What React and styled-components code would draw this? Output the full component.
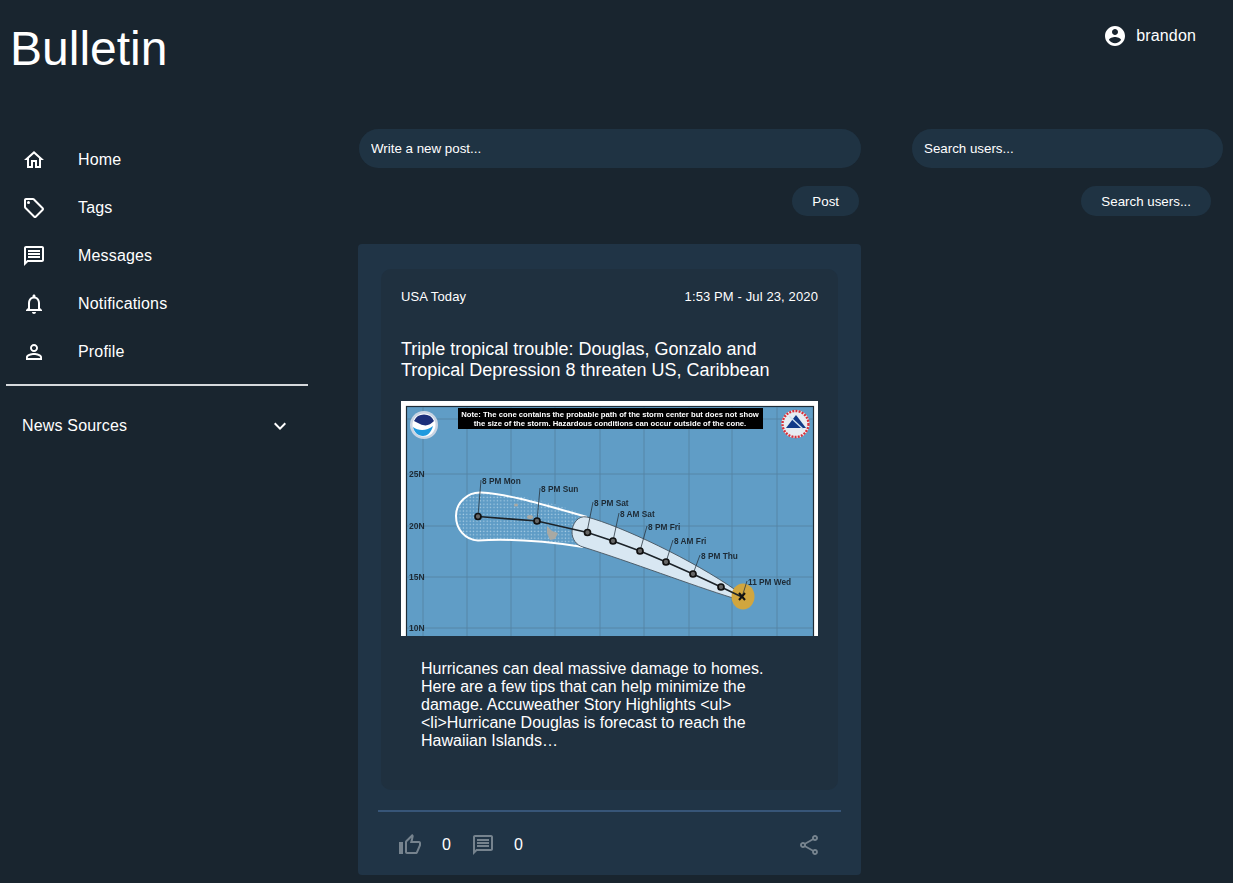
import React from 'react';
import styled, { createGlobalStyle } from 'styled-components';

const Global = createGlobalStyle`
  html, body { margin: 0; padding: 0; background: #19252f; }
  body { font-family: "Liberation Sans", Arial, sans-serif; color: #fff; }
  * { box-sizing: border-box; }
`;

const Page = styled.div`
  width: 1233px;
  height: 883px;
  overflow: hidden;
  background: #19252f;
`;
const Header = styled.header`
  height: 129px;
  display: flex;
  justify-content: space-between;
  align-items: flex-start;
`;
const Logo = styled.h1`
  margin: 21px 0 0 10px;
  font-size: 48px;
  line-height: 55px;
  font-weight: 400;
`;
const UserBox = styled.div`
  display: flex;
  align-items: center;
  gap: 9px;
  margin: 24px 37px 0 0;
  font-size: 16px;
  line-height: 24px;
  letter-spacing: 0.15px;
`;
const Columns = styled.div`
  display: grid;
  grid-template-columns: 358px 503px 362px;
  gap: 0;
`;
const Sidebar = styled.nav`
  padding: 7px 6px 0 6px;
  width: 314px;
  letter-spacing: 0.17px;
`;
const NavItem = styled.div`
  display: flex;
  align-items: center;
  height: 48px;
  padding-left: 16px;
  font-size: 16px;
`;
const NavIcon = styled.span`
  display: flex;
  width: 56px;
`;
const Rule = styled.hr`
  margin: 8px 0 0;
  border: 0;
  height: 2px;
  background: #d6d9dc;
`;
const Sources = styled.div`
  display: flex;
  align-items: center;
  justify-content: space-between;
  height: 48px;
  margin-top: 16px;
  padding: 0 16px;
  font-size: 16px;
`;
const Main = styled.main`
  display: flex;
  flex-direction: column;
`;
const Pill = styled.input`
  display: block;
  height: 39px;
  width: ${p => p.$w}px;
  margin-left: ${p => p.$left}px;
  border: 0;
  outline: 0;
  padding: 0 12px;
  border-radius: 20px;
  background: #1f3343;
  color: #fff;
  font: 13.33px "Liberation Sans", Arial, sans-serif;
  &::placeholder { color: #fff; opacity: 1; }
`;
const ActionBtn = styled.button`
  display: block;
  height: 30px;
  margin-top: 18px;
  padding: 0 ${p => p.$pad}px;
  border: 0;
  border-radius: 15px;
  background: #1f3343;
  color: #fff;
  font: 13.33px "Liberation Sans", Arial, sans-serif;
`;
const BtnRow = styled.div`
  display: flex;
  justify-content: flex-end;
  padding-right: ${p => p.$right}px;
`;
const Card = styled.article`
  margin-top: 28px;
  width: 503px;
  height: 631px;
  background: #203446;
  border-radius: 4px;
  padding: 25px 20px 0;
`;
const Inner = styled.div`
  margin: 0 3px;
  width: 457px;
  height: 521px;
  padding: 20px;
  border-radius: 10px;
  background: #1f303f;
`;
const Meta = styled.div`
  display: flex;
  justify-content: space-between;
  font-size: 13px;
  line-height: 15px;
  letter-spacing: 0.12px;
`;
const Headline = styled.h2`
  margin: 35px 0 20px;
  font-size: 18px;
  line-height: 21px;
  font-weight: 400;
`;
const MapFrame = styled.svg`
  display: block;
  width: 417px;
  height: 235px;
`;
const Summary = styled.p`
  margin: 24px 0 0 20px;
  width: 360px;
  font-size: 16px;
  line-height: 18px;
`;
const CardRule = styled.div`
  height: 2px;
  margin-top: 20px;
  background: #375578;
`;
const Actions = styled.div`
  display: flex;
  align-items: center;
  height: 66px;
  padding: 0 20px;
  font-size: 16px;
`;
const Count = styled.span`
  margin: 0 ${p => p.$after}px 0 ${p => p.$before}px;
`;
const Spacer = styled.div`
  flex: 1;
`;
const Aside = styled.aside`
  margin-left: 51px;
`;

const Icon = ({ d, size = 24, color = '#fff', children }) => (
  <svg width={size} height={size} viewBox="0 0 24 24" fill={color}>
    <path d={d} />
    {children}
  </svg>
);

const I = {
  home: 'M12 5.69l5 4.5V18h-2v-6H9v6H7v-7.81l5-4.5M12 3L2 12h3v8h6v-6h2v6h6v-8h3L12 3z',
  tag: 'M21.41 11.58l-9-9C12.05 2.22 11.55 2 11 2H4c-1.1 0-2 .9-2 2v7c0 .55.22 1.05.59 1.42l9 9c.36.36.86.58 1.41.58s1.05-.22 1.41-.59l7-7c.37-.36.59-.86.59-1.41s-.23-1.06-.59-1.42zM13 20.01L4 11V4h7v-.01l9 8.99-7 7.02z',
  msg: 'M20 2H4c-1.1 0-2 .9-2 2v18l4-4h14c1.1 0 2-.9 2-2V4c0-1.1-.9-2-2-2zm0 14H5.17L4 17.17V4h16v12zM6 12h12v2H6zm0-3h12v2H6zm0-3h12v2H6z',
  bell: 'M12 22c1.1 0 2-.9 2-2h-4c0 1.1.9 2 2 2zm6-6v-5c0-3.07-1.63-5.64-4.5-6.32V4c0-.83-.67-1.5-1.5-1.5s-1.5.67-1.5 1.5v.68C7.64 5.36 6 7.92 6 11v5l-2 2v1h16v-1l-2-2zm-2 1H8v-6c0-2.48 1.51-4.5 4-4.5s4 2.02 4 4.5v6z',
  person: 'M12 5.9c1.16 0 2.1.94 2.1 2.1s-.94 2.1-2.1 2.1S9.9 9.16 9.9 8s.94-2.1 2.1-2.1m0 9c2.97 0 6.1 1.46 6.1 2.1v1.1H5.9V17c0-.64 3.13-2.1 6.1-2.1M12 4C9.79 4 8 5.79 8 8s1.79 4 4 4 4-1.79 4-4-1.79-4-4-4zm0 9c-2.67 0-8 1.34-8 4v3h16v-3c0-2.66-5.33-4-8-4z',
  account: 'M12 2C6.48 2 2 6.48 2 12s4.48 10 10 10 10-4.48 10-10S17.52 2 12 2zm0 3c1.66 0 3 1.34 3 3s-1.34 3-3 3-3-1.34-3-3 1.34-3 3-3zm0 14.2c-2.5 0-4.71-1.28-6-3.22.03-1.99 4-3.08 6-3.08 1.99 0 5.97 1.09 6 3.08-1.29 1.94-3.5 3.22-6 3.22z',
  expand: 'M16.59 8.59L12 13.17 7.41 8.59 6 10l6 6 6-6z',
  thumb: 'M9 21h9c.83 0 1.54-.5 1.84-1.22l3.02-7.05c.09-.23.14-.47.14-.73v-2c0-1.1-.9-2-2-2h-6.31l.95-4.57.03-.32c0-.41-.17-.79-.44-1.06L14.17 1 7.58 7.59C7.22 7.95 7 8.45 7 9v10c0 1.1.9 2 2 2zM9 9l4.34-4.34L12 10h9v2l-3 7H9V9zM1 9h4v12H1z',
  share: 'M18 16.08c-.76 0-1.44.3-1.96.77L8.91 12.7c.05-.23.09-.46.09-.7s-.04-.47-.09-.7l7.05-4.11c.54.5 1.25.81 2.04.81 1.66 0 3-1.34 3-3s-1.34-3-3-3-3 1.34-3 3c0 .24.04.47.09.7L8.04 9.81C7.5 9.31 6.79 9 6 9c-1.66 0-3 1.34-3 3s1.34 3 3 3c.79 0 1.5-.31 2.04-.81l7.12 4.16c-.05.21-.08.43-.08.65 0 1.61 1.31 2.92 2.92 2.92s2.92-1.31 2.92-2.92c0-1.61-1.31-2.92-2.92-2.92zM18 4c.55 0 1 .45 1 1s-.45 1-1 1-1-.45-1-1 .45-1 1-1zM6 13c-.55 0-1-.45-1-1s.45-1 1-1 1 .45 1 1-.45 1-1 1zm12 7.02c-.55 0-1-.45-1-1s.45-1 1-1 1 .45 1 1-.45 1-1 1z',
};

const nav = [
  ['Home', I.home],
  ['Tags', I.tag, <circle key="c" cx="6.5" cy="6.5" r="1.5" />],
  ['Messages', I.msg],
  ['Notifications', I.bell],
  ['Profile', I.person],
];

// Forecast map: all coordinates are screen position minus the picture's origin (401, 401).
const hLines = [18, 73, 125, 176, 227];
const vLines = [22, 66, 110, 154, 199, 243, 288, 331, 376];
const track = [
  [77, 115.5], [136, 120], [186.5, 131.5], [212, 140], [239, 150], [265, 161], [292, 173], [320, 186],
];
const labels = [
  ['8 PM Mon', 81, 83, 77, 115], ['8 PM Sun', 140, 91, 136, 120], ['8 PM Sat', 193, 105, 186, 131],
  ['8 AM Sat', 219, 116, 212, 140], ['8 PM Fri', 247, 129, 239, 150], ['8 AM Fri', 273, 143, 265, 161],
  ['8 PM Thu', 300, 158, 292, 173], ['11 PM Wed', 347, 184, 341, 196],
];
const latLabels = [['25N', 8, 76], ['20N', 8, 128], ['15N', 8, 179], ['10N', 8, 230]];

const StormMap = () => (
  <MapFrame viewBox="0 0 417 235" role="img" aria-label="Hurricane Douglas forecast cone">
    <defs>
      <pattern id="dots" width="3.4" height="3.4" patternUnits="userSpaceOnUse">
        <rect width="3.4" height="3.4" fill="#5f9cc6" />
        <circle cx="1.2" cy="1.2" r="0.7" fill="#a9cde4" />
      </pattern>
    </defs>
    <rect width="417" height="235" fill="#fff" />
    <g style={{ filter: 'blur(0.35px)' }}>
      <rect x="5.5" y="5.500" width="407" height="231" fill="#609dc6" stroke="#1f2d38" strokeWidth="1.2" />
      <g stroke="#5584a4" strokeWidth="0.9">
        {hLines.map(y => <line key={y} x1="6" x2="412" y1={y} y2={y} />)}
        {vLines.map(x => <line key={x} x1={x} x2={x} y1="6" y2="235" />)}
      </g>
      <path d="M80 91.500 C130 94 165 105 186 116 L182 146 C150 141 115 137 77 139.500 C64 139 55 128 55 115 C55 102 66 91 80 91.500 Z" fill="url(#dots)" />
      <path d="M186 116 C130 100 105 93 80 91.500 C66 91 55 102 55 115 C55 128 64 139 77 139.500 C115 137 150 141 182 146" fill="none" stroke="#fff" strokeWidth="2" />
      <path d="M186 116 C220 125 292 159 336 190 L332 197 C290 184 230 161 182 146 C175 144 171 138 171 131 C171 123 177 114 186 116 Z" fill="#d8e7f2" stroke="#46545f" strokeWidth="0.9" />
      <g fill="#a9a9a3">
        <path d="M146 125 l5 5 l6 2 l-3 6 l-5 1 l-3 -7 Z" />
        <ellipse cx="129" cy="116" rx="3" ry="2" />
        <ellipse cx="115" cy="104" rx="2" ry="1.500" />
      </g>
      <ellipse cx="342" cy="195.500" rx="11.500" ry="13" fill="#d1a63f" />
      <polyline points={track.map(p => p.join(',')).join(' ') + ' 341,196'} fill="none" stroke="#1c2329" strokeWidth="1.600" />
      {labels.map(([t, x, y, px, py]) => (
        <g key={t}>
          <line x1={x - 1} y1={y - 4} x2={px} y2={py} stroke="#2a3640" strokeWidth="0.8" />
          <text x={x} y={y} fontSize="8.300" fontWeight="700" fill="#1d2a35" fontFamily="Liberation Sans, sans-serif">{t}</text>
        </g>
      ))}
      {track.map(([x, y]) => (
        <circle key={x} cx={x} cy={y} r="3" fill="#666" stroke="#111" strokeWidth="1.700" />
      ))}
      <path d="M338 192 l6 7 M344 192 l-6 7" stroke="#111" strokeWidth="2" />
      {latLabels.map(([t, x, y]) => (
        <text key={t} x={x} y={y} fontSize="8.500" fontWeight="700" fill="#1d2a35" fontFamily="Liberation Sans, sans-serif">{t}</text>
      ))}
      <rect x="57" y="7" width="305" height="21" fill="#000" />
      <g fontSize="7.700" fontWeight="700" fill="#fff" fontFamily="Liberation Sans, sans-serif" textAnchor="middle">
        <text x="209" y="15.500">Note: The cone contains the probable path of the storm center but does not show</text>
        <text x="209" y="24.500">the size of the storm. Hazardous conditions can occur outside of the cone.</text>
      </g>
      <circle cx="23" cy="24" r="14" fill="#c9d5e4" />
      <circle cx="23" cy="24" r="11.500" fill="#fff" />
      <path d="M13 20 a11 11 0 0 1 20 0 c-4 4 -8 6 -14 3 Z" fill="#1c2f7a" />
      <path d="M12 26 c5 4 14 4 20 -1 c-2 7 -6 10 -10 10 c-5 0 -9 -4 -10 -9 Z" fill="#1f9adf" />
      <circle cx="394.500" cy="23" r="14" fill="#e8edf2" />
      <circle cx="394.500" cy="23" r="13" fill="none" stroke="#d8323c" strokeWidth="2.400" strokeDasharray="2 1.200" />
      <path d="M385 27 L395 14 L405 27 Z" fill="#123a88" />
      <path d="M388 15 L402 28" stroke="#cfe2ef" strokeWidth="1.400" />
    </g>
  </MapFrame>
);

export default function App() {
  return (
    <Page>
      <Global />
      <Header>
        <Logo>Bulletin</Logo>
        <UserBox>
          <Icon d={I.account} />
          brandon
        </UserBox>
      </Header>
      <Columns>
        <Sidebar>
          {nav.map(([label, d, extra]) => (
            <NavItem key={label}>
              <NavIcon><Icon d={d}>{extra}</Icon></NavIcon>
              {label}
            </NavItem>
          ))}
          <Rule />
          <Sources>
            News Sources
            <Icon d={I.expand} />
          </Sources>
        </Sidebar>
        <Main>
          <Pill $w={502} $left={1} placeholder="Write a new post..." readOnly />
          <BtnRow $right={2}>
            <ActionBtn $pad={20}>Post</ActionBtn>
          </BtnRow>
          <Card>
            <Inner>
              <Meta>
                <span>USA Today</span>
                <span>1:53 PM - Jul 23, 2020</span>
              </Meta>
              <Headline>
                Triple tropical trouble: Douglas, Gonzalo and
                <br />
                Tropical Depression 8 threaten US, Caribbean
              </Headline>
              <StormMap />
              <Summary>
                Hurricanes can deal massive damage to homes. Here are a few tips that can help minimize the damage. Accuweather Story Highlights &lt;ul&gt;
                <br />
                &lt;li&gt;Hurricane Douglas is forecast to reach the Hawaiian Islands…
              </Summary>
            </Inner>
            <CardRule />
            <Actions>
              <Icon d={I.thumb} color="#76838e" />
              <Count $before={20} $after={20}>0</Count>
              <Icon d={I.msg} color="#76838e" />
              <Count $before={19} $after={0}>0</Count>
              <Spacer />
              <Icon d={I.share} color="#76838e" />
            </Actions>
          </Card>
        </Main>
        <Aside>
          <Pill $w={311} $left={0} placeholder="Search users..." readOnly />
          <BtnRow $right={12}>
            <ActionBtn $pad={20}>Search users...</ActionBtn>
          </BtnRow>
        </Aside>
      </Columns>
    </Page>
  );
}
